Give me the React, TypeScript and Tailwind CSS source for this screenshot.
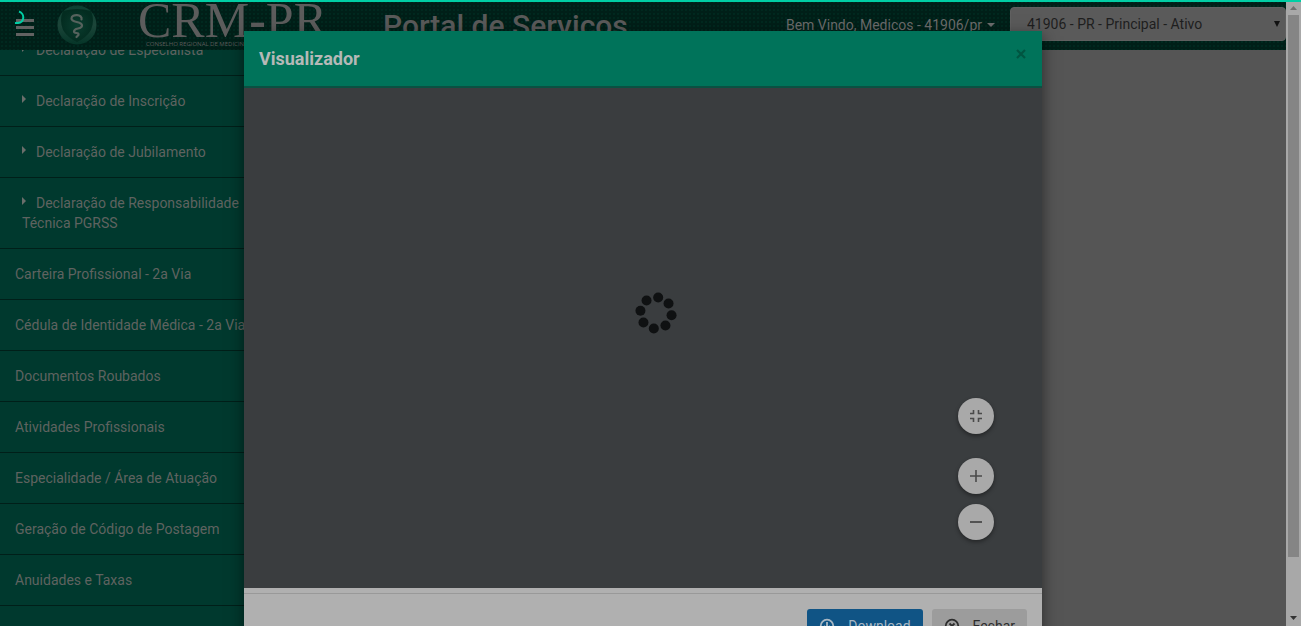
import React from "react";

const menu = [
  { label: "Declaração de Especialista", sub: true },
  { label: "Declaração de Inscrição", sub: true },
  { label: "Declaração de Jubilamento", sub: true },
  { label: "Declaração de Responsabilidade Técnica PGRSS", sub: true },
  { label: "Carteira Profissional - 2a Via" },
  { label: "Cédula de Identidade Médica - 2a Via" },
  { label: "Documentos Roubados" },
  { label: "Atividades Profissionais" },
  { label: "Especialidade / Área de Atuação" },
  { label: "Geração de Código de Postagem" },
  { label: "Anuidades e Taxas" },
];

function Crest() {
  return (
    <svg className="h-10 w-10 shrink-0" viewBox="0 0 40 40" aria-hidden="true">
      <defs>
        <linearGradient id="rim" x1="0" y1="0" x2="0" y2="1">
          <stop offset="0" stopColor="#0c3f31" />
          <stop offset="0.5" stopColor="#1c4539" />
          <stop offset="1" stopColor="#053528" />
        </linearGradient>
        <radialGradient id="shield">
          <stop offset="0" stopColor="#0a3d2f" />
          <stop offset="1" stopColor="#032c20" />
        </radialGradient>
      </defs>
      <circle cx="20" cy="20" r="19.5" fill="url(#rim)" />
      <path d="M6 6Q20 2 34 6Q38 15 34 25Q29 33 20 37Q11 33 6 25Q2 15 6 6Z" fill="url(#shield)" />
      <path
        d="M24.5 14.5C26 9 14.5 8.500 14.500 13.500C14.500 18 25 16 25 20.500C25 25 17 22 17 26.500C17 29 22.500 27 21.500 30L19.500 32"
        fill="none"
        stroke="#56625d"
        strokeWidth="2.2"
        strokeLinecap="round"
      />
    </svg>
  );
}

function Header() {
  return (
    <header className="relative flex h-[50px] shrink-0 items-start overflow-hidden bg-[#001f18] bg-[radial-gradient(#002f24_0.5px,transparent_1px)] bg-[size:4px_4px] font-[Roboto,sans-serif]">
      <button aria-label="Menu" className="ml-4 mt-[19px] flex w-[18px] shrink-0 flex-col gap-1">
        <span className="h-[3px] w-full bg-[#626262]" />
        <span className="h-[3px] w-full bg-[#626262]" />
        <span className="h-[3px] w-full bg-[#626262]" />
      </button>
      <a href="#" className="ml-[23px] mt-[5px] flex shrink-0" aria-label="CRM-PR">
        <Crest />
      </a>
      <div className="ml-[41px] flex w-[245px] shrink-0 flex-col whitespace-nowrap text-[#5c5c5c]">
        <span className="h-10 font-['Liberation_Serif',serif] text-[50px] leading-10">
          CRM<b>-</b>PR
        </span>
        <span className="pl-2 font-['Open_Sans',sans-serif] text-[6px] leading-2">CONSELHO REGIONAL DE MEDICINA DO PARANÁ</span>
      </div>
      <h1 className="mt-2 flex-1 whitespace-nowrap text-[30px] font-medium leading-9 text-[#5a5a5a]">Portal de Serviços</h1>
      <button className="mr-[15px] mt-[15px] flex shrink-0 items-center gap-[5px] text-sm leading-5 text-[#6c6c6c]">
        Bem Vindo, Medicos - 41906/pr
        <svg className="h-1 w-2" viewBox="0 0 8 4" aria-hidden="true"><path d="M0 0H8L4 4Z" fill="currentColor" /></svg>
      </button>
      <div className="relative mt-[7px] w-[276px] shrink-0">
        <select
          aria-label="Inscrição"
          className="h-[34px] w-full appearance-none rounded border border-[#606060] bg-[#5a5a5a] px-4 text-sm leading-5 text-[#1e1e1e]"
        >
          <option>41906 - PR - Principal - Ativo</option>
        </select>
        <svg className="pointer-events-none absolute right-[6px] top-[14px] h-[6px] w-[6px]" viewBox="0 0 6 6" aria-hidden="true">
          <path d="M0 0H6L3 6Z" fill="#111" />
        </svg>
      </div>
    </header>
  );
}

function Sidebar() {
  return (
    <nav className="w-[250px] shrink-0 overflow-hidden bg-[#00392e]">
      <ul className="-mt-[25px]">
        {menu.map((item) => (
          <li key={item.label} className="border-b border-[#001f19]">
            <a
              href="#"
              className={
                item.sub
                  ? "block py-[15px] pl-[22px] pr-1 text-sm leading-5 text-[#5f6360]"
                  : "block whitespace-nowrap py-[15px] pl-[15px] text-sm leading-5 text-[#5f6360]"
              }
            >
              {item.sub && (
                <svg className="mr-[10px] inline-block h-2 w-1 align-[3px]" viewBox="0 0 4 8" aria-hidden="true">
                  <path d="M0 0L4 4L0 8Z" fill="#6a6e6b" />
                </svg>
              )}
              {item.label}
            </a>
          </li>
        ))}
      </ul>
    </nav>
  );
}

function Scrollbar() {
  return (
    <div className="flex w-[15px] shrink-0 flex-col items-center bg-[#a8a8a8]" aria-hidden="true">
      <svg className="h-[15px] w-[15px] shrink-0" viewBox="0 0 15 15"><path d="M4 10H11L7.5 6Z" fill="#707070" /></svg>
      <div className="w-[11px] grow-[542] bg-[#858585]" />
      <div className="grow-[54]" />
      <svg className="h-[15px] w-[15px] shrink-0" viewBox="0 0 15 15"><path d="M4 5H11L7.5 9Z" fill="#333" /></svg>
    </div>
  );
}

const round = "flex size-9 items-center justify-center rounded-full bg-[#a9a9a9] shadow-[0_2px_4px_rgba(0,0,0,0.4)]";

function Viewer() {
  const angles = [8, 53, 98, 143, 188, 233, 278, 323];
  return (
    <div className="relative flex h-[500px] items-center justify-center bg-[#3a3d3f]">
      <svg className="mb-[50px] ml-[26px] size-11" viewBox="-22 -22 44 44" role="img" aria-label="Carregando">
        {angles.map((a) => (
          <circle
            key={a}
            cx={15.7 * Math.sin((a * Math.PI) / 180)}
            cy={-15.7 * Math.cos((a * Math.PI) / 180)}
            r="5"
            fill="#0f1112"
          />
        ))}
      </svg>
      <div className="absolute bottom-12 right-12 flex flex-col gap-[10px]">
        <button aria-label="Ajustar à página" className={round + " mb-[14px]"}>
          <svg className="size-3" viewBox="0 0 12 12" aria-hidden="true">
            <path d="M0 3.5H3.5V0M8.5 0V3.5H12M12 8.5H8.5V12M3.5 12V8.5H0" fill="none" stroke="#4a4a4a" strokeWidth="1.6" />
          </svg>
        </button>
        <button aria-label="Aumentar zoom" className={round}>
          <svg className="size-3" viewBox="0 0 12 12" aria-hidden="true"><path d="M0 6H12M6 0V12" stroke="#4a4a4a" strokeWidth="1.6" /></svg>
        </button>
        <button aria-label="Diminuir zoom" className={round}>
          <svg className="size-3" viewBox="0 0 12 12" aria-hidden="true"><path d="M0 6H12" stroke="#4a4a4a" strokeWidth="1.8" /></svg>
        </button>
      </div>
    </div>
  );
}

function Modal() {
  return (
    <div className="absolute inset-0 right-[15px] overflow-hidden pt-[31px]">
      <div role="dialog" aria-labelledby="viewer-title" className="mx-auto max-w-[798px] bg-[#b0b0b0] shadow-[0_5px_15px_rgba(0,0,0,0.5)]">
        <div className="flex items-start justify-between border-b-2 border-[#0a5142] bg-[#00735a] p-[15px]">
          <h2 id="viewer-title" className="text-lg font-bold leading-[25px] text-[#b5b9b7]">Visualizador</h2>
          <button aria-label="Fechar" className="mt-[2px] flex size-3 items-center justify-center">
            <svg className="size-[10px]" viewBox="0 0 10 10" aria-hidden="true"><path d="M1 1L9 9M9 1L1 9" stroke="#005541" strokeWidth="2.2" /></svg>
          </button>
        </div>
        <Viewer />
        <div className="mt-[5px] flex justify-end gap-[9px] border-t border-[#999] p-[15px]">
          <button className="flex h-[34px] items-center rounded-[3px] bg-[#105485] px-3 text-sm text-[#a9b8c4]">
            <svg className="mr-[13px] size-4" viewBox="0 0 16 16" fill="none" stroke="currentColor" strokeWidth="1.8" aria-hidden="true">
              <circle cx="8" cy="8" r="6.3" /><path d="M8 4V11M5 8L8 11L11 8" />
            </svg>
            Download
          </button>
          <button className="flex h-[34px] items-center rounded-[3px] bg-[#9c9c9c] px-3 text-sm text-[#2c2c2c]">
            <svg className="mr-[13px] size-4" viewBox="0 0 16 16" fill="none" stroke="currentColor" strokeWidth="1.8" aria-hidden="true">
              <circle cx="8" cy="8" r="6.3" /><path d="M5.5 5.5L10.5 10.5M10.5 5.5L5.5 10.5" />
            </svg>
            Fechar
          </button>
        </div>
      </div>
    </div>
  );
}

export default function App() {
  return (
    <div className="relative flex h-screen overflow-hidden bg-[#555] font-[Roboto,sans-serif]">
      <div className="flex min-w-0 flex-1 flex-col">
        <Header />
        <div className="flex min-h-0 flex-1">
          <Sidebar />
          <main className="flex-1 bg-[#555]" />
        </div>
      </div>
      <Scrollbar />
      <Modal />
      <div className="absolute inset-x-0 top-0 h-[2px] bg-[#00cfa5]" />
      <svg className="absolute left-[14px] top-[10px] size-[14px]" viewBox="0 0 14 14" aria-hidden="true">
        <path d="M5 1.5C11 3.500 11.500 14 1 13" fill="none" stroke="#00cfa5" strokeWidth="2" />
      </svg>
    </div>
  );
}
